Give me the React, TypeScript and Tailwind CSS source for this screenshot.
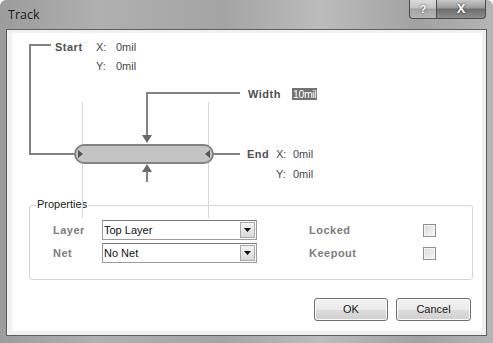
import React from 'react'

const font = { fontFamily: '"Liberation Sans", Arial, sans-serif' }

function Label({ x, y, bold, children, className = '' }: { x: number; y: number; bold?: boolean; children: React.ReactNode; className?: string }) {
  return (
    <span
      className={`absolute whitespace-nowrap text-[11px] leading-[13px] ${bold ? 'font-bold tracking-[0.5px] text-[#505050]' : 'text-[#474747]'} ${className}`}
      style={{ left: x, top: y }}
    >
      {children}
    </span>
  )
}

function Diagram() {
  return (
    <div className="relative z-10 h-[172px] w-full">
      <svg className="absolute left-0 top-0 overflow-visible" width="470" height="172">
        {/* guide lines */}
        <line x1="70.5" y1="69" x2="70.5" y2="185" stroke="#d6d6d6" strokeWidth="1" />
        <line x1="196.5" y1="69" x2="196.5" y2="185" stroke="#d6d6d6" strokeWidth="1" />
        {/* start leader */}
        <polyline points="39,12 18,12 18,121 70,121" fill="none" stroke="#828282" strokeWidth="2" />
        {/* end leader */}
        <line x1="196" y1="121" x2="228" y2="121" stroke="#828282" strokeWidth="2" />
        {/* width leader */}
        <polyline points="228,60 135,60 135,103" fill="none" stroke="#828282" strokeWidth="2" />
        {/* capsule */}
        <rect x="63" y="112" width="138" height="18" rx="9" fill="#c4c4c4" stroke="#858585" strokeWidth="2" />
        {/* end arrows */}
        <polygon points="66,117 71,121 66,125" fill="#555555" />
        <polygon points="198,117 193,121 198,125" fill="#555555" />
        {/* width arrows */}
        <polygon points="130,102 140,102 135,110" fill="#6a6a6a" />
        <polygon points="130,139 140,139 135,131" fill="#6a6a6a" />
        <line x1="135" y1="138" x2="135" y2="149" stroke="#828282" strokeWidth="2" />
      </svg>
      <Label x={43} y={8} bold>Start</Label>
      <Label x={84} y={8}>X:</Label>
      <Label x={104} y={8}>0mil</Label>
      <Label x={84} y={27}>Y:</Label>
      <Label x={104} y={27}>0mil</Label>
      <Label x={236} y={55} bold>Width</Label>
      <span
        className="absolute flex h-[12px] items-center bg-[#727272] px-[1px] text-[10.5px] leading-[12px] tracking-[-0.4px] text-white"
        style={{ left: 280, top: 55 }}
      >
        10mil
      </span>
      <Label x={235} y={115} bold>End</Label>
      <Label x={264} y={115}>X:</Label>
      <Label x={281} y={115}>0mil</Label>
      <Label x={264} y={135}>Y:</Label>
      <Label x={281} y={135}>0mil</Label>
    </div>
  )
}

function Select({ value }: { value: string }) {
  return (
    <div className="flex h-[20px] w-[155px] items-stretch border border-[#9c9c9c] border-t-[#7a7a7a] bg-white">
      <span className="flex-1 pl-[1px] text-[11px] leading-[18px] text-[#111]">{value}</span>
      <div className="m-[1px] flex w-[15px] items-center justify-center border border-[#a8a8a8] bg-gradient-to-b from-[#f4f4f4] to-[#d9d9d9]">
        <svg width="7" height="4" viewBox="0 0 7 4">
          <polygon points="0,0 7,0 3.5,4" fill="#111" />
        </svg>
      </div>
    </div>
  )
}

function Checkbox() {
  return <div className="h-[13px] w-[13px] border border-[#909090] bg-gradient-to-br from-[#dcdcdc] to-[#f6f6f6] shadow-[inset_0_0_0_1px_#f4f4f4]" />
}

function Row({ label, value, right }: { label: string; value: string; right: string }) {
  return (
    <div className="flex h-[20px] items-center">
      <span className="w-[49px] text-[11px] font-bold tracking-[0.5px] text-[#7c7c7c]">{label}</span>
      <Select value={value} />
      <span className="ml-[52px] w-[114px] text-[11px] font-bold tracking-[0.5px] text-[#7c7c7c]">{right}</span>
      <Checkbox />
    </div>
  )
}

function Button({ children, w }: { children: React.ReactNode; w: string }) {
  return (
    <button className={`h-[23px] ${w} rounded-[3px] border border-[#707070] bg-[linear-gradient(180deg,#f2f2f2_0%,#ebebeb_50%,#dddddd_51%,#cfcfcf_100%)] text-[11px] text-[#1a1a1a] shadow-[inset_0_0_0_1px_#fcfcfc]`}>
      {children}
    </button>
  )
}

export default function App() {
  return (
    <div
      className="flex h-[343px] w-[493px] flex-col overflow-hidden rounded-t-[6px] bg-[linear-gradient(90deg,#9c9c9c,#b0b0b0_20%,#a4a4a4_45%,#bcbcbc_65%,#a2a2a2_85%,#b4b4b4)]"
      style={font}
    >
      <div className="flex h-[29px] shrink-0 items-start justify-between pl-[8px]">
        <span className="mt-[7px] text-[12.5px] leading-[15px] text-[#1a1a1a]" style={{ fontFamily: '"Open Sans", "Noto Sans", sans-serif' }}>
          Track
        </span>
        <div className="mr-[7px] flex">
          <div className="flex h-[19px] w-[28px] items-center justify-center rounded-bl-[4px] border border-t-0 border-[#4c4c4c] bg-[linear-gradient(180deg,#dcdcdc,#c2c2c2_45%,#a4a4a4_50%,#b6b6b6)] text-[11px] font-bold text-white [text-shadow:0_0_2px_#333]">
            ?
          </div>
          <div className="flex h-[19px] w-[49px] items-center justify-center rounded-br-[4px] border border-l-0 border-t-0 border-[#4c4c4c] bg-[linear-gradient(180deg,#c8c8c8,#9a9a9a_45%,#6c6c6c_50%,#8e8e8e)] text-[13px] font-bold text-white [text-shadow:0_0_2px_#222]">
            X
          </div>
        </div>
      </div>
      <div className="mx-[6px] mb-[7px] flex flex-1 flex-col border border-[#5f5f5f] bg-[#f0f0f0] pb-[4px] pl-[5px] pr-[4px] pt-[3px]">
        <div className="flex flex-1 flex-col bg-white">
          <Diagram />
          <div className="relative ml-[17px] h-[75px] w-[444px] rounded-[3px] border border-[#d5d5d5] pl-[23px] pt-[14px]">
            <span className="absolute left-[6px] top-[-8px] bg-white px-[1px] text-[11px] leading-[13px] text-[#222]">Properties</span>
            <div className="flex flex-col gap-[3px]">
              <Row label="Layer" value="Top Layer" right="Locked" />
              <Row label="Net" value="No Net" right="Keepout" />
            </div>
          </div>
          <div className="mt-[18px] flex justify-end gap-[8px] pr-[11px]">
            <Button w="w-[74px]">OK</Button>
            <Button w="w-[75px]">Cancel</Button>
          </div>
        </div>
      </div>
    </div>
  )
}
